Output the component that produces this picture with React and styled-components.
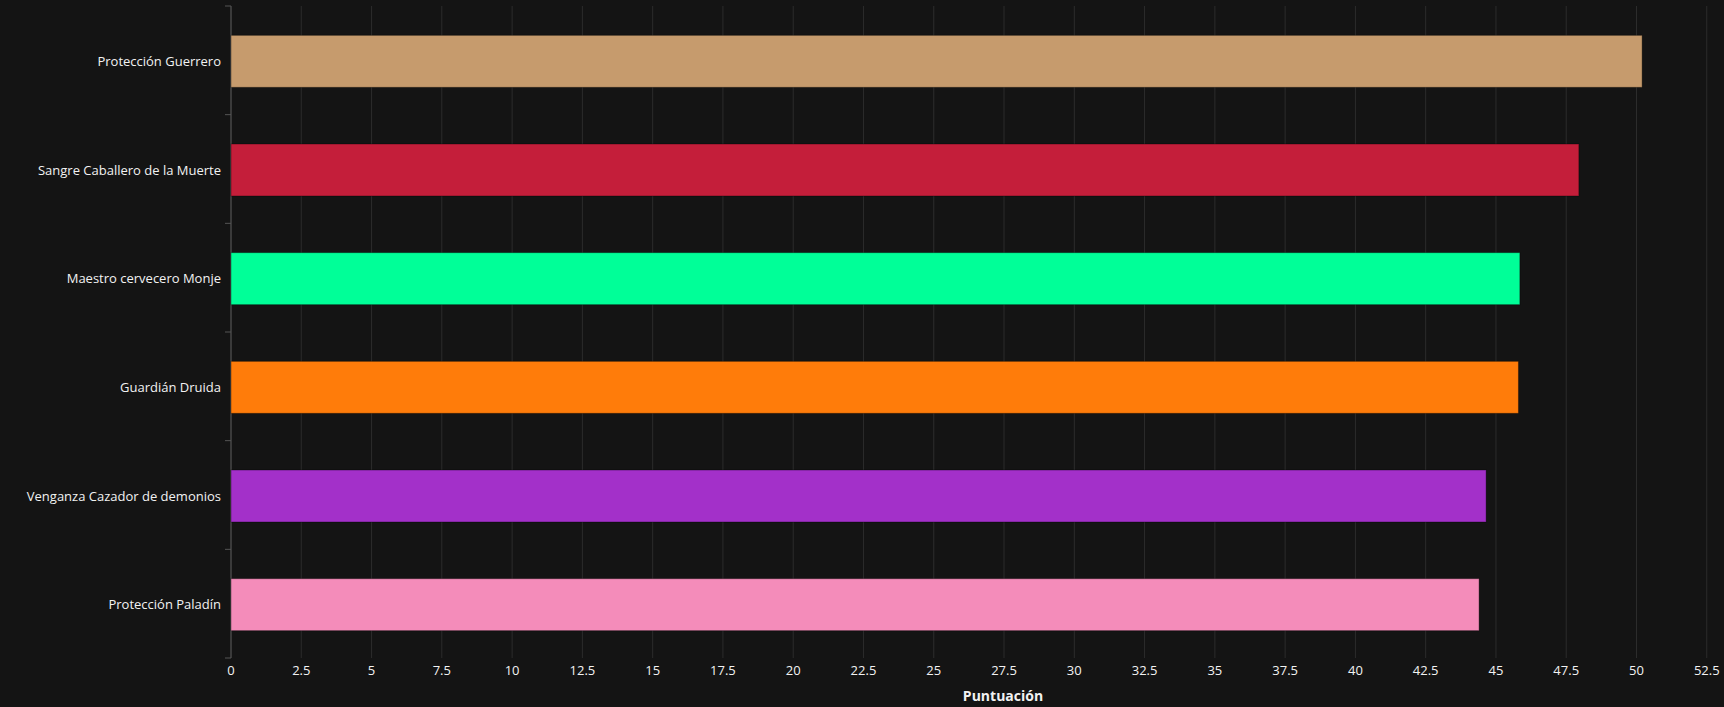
import React from 'react';
import styled, { createGlobalStyle } from 'styled-components';

const Global = createGlobalStyle`
  html, body { margin: 0; background: #141414; }
  body { font-family: "Open Sans", "Noto Sans", sans-serif; }
`;

const Wrap = styled.div`
  width: 1724px;
  height: 707px;
  background: #141414;
  overflow: hidden;
`;

const Chart = styled.svg`
  display: block;
  font-family: "Open Sans", "Noto Sans", sans-serif;
`;

const data = [
  { name: 'Protección Guerrero', value: 50.2, color: '#C69B6D' },
  { name: 'Sangre Caballero de la Muerte', value: 47.95, color: '#C41E3A' },
  { name: 'Maestro cervecero Monje', value: 45.85, color: '#00FF98' },
  { name: 'Guardián Druida', value: 45.8, color: '#FF7C0A' },
  { name: 'Venganza Cazador de demonios', value: 44.65, color: '#A330C9' },
  { name: 'Protección Paladín', value: 44.4, color: '#F48CBA' },
];

const X0 = 231;
const UNIT = 28.11;
const TOP = 6;
const BOTTOM = 658;
const BAND = (BOTTOM - TOP) / data.length;
const BAR_H = 52;

export default function App() {
  const ticks = [];
  for (let i = 0; i <= 21; i++) ticks.push(i * 2.5);
  return (
    <Wrap>
      <Global />
      <Chart width="1724" height="707">
        {ticks.map((t) => (
          <line key={t} x1={X0 + t * UNIT} x2={X0 + t * UNIT} y1={TOP} y2={BOTTOM} stroke="#2c2c2c" strokeWidth="1" />
        ))}
        <line x1={X0} x2={X0} y1={TOP} y2={BOTTOM} stroke="#555" />
        <line x1={X0 - 6} x2={X0} y1={BOTTOM} y2={BOTTOM} stroke="#555" />
        {data.map((d, i) => {
          const yTop = TOP + i * BAND;
          const cy = yTop + BAND / 2 + 1;
          return (
            <g key={d.name}>
              <line x1={X0 - 6} x2={X0} y1={yTop} y2={yTop} stroke="#555" />
              <rect x={X0} y={cy - BAR_H / 2} width={d.value * UNIT} height={BAR_H} fill={d.color} stroke="rgba(0,0,0,0.35)" />
              <text x={221} y={cy + 4.5} textAnchor="end" fill="#f2f2f2" fontSize="13">{d.name}</text>
            </g>
          );
        })}
        {ticks.map((t) => (
          <text key={t} x={X0 + t * UNIT} y={675} textAnchor="middle" fill="#f2f2f2" fontSize="13">{t}</text>
        ))}
        <text x={1003} y={701} textAnchor="middle" fill="#f2f2f2" fontSize="14" fontWeight="bold">Puntuación</text>
      </Chart>
    </Wrap>
  );
}
